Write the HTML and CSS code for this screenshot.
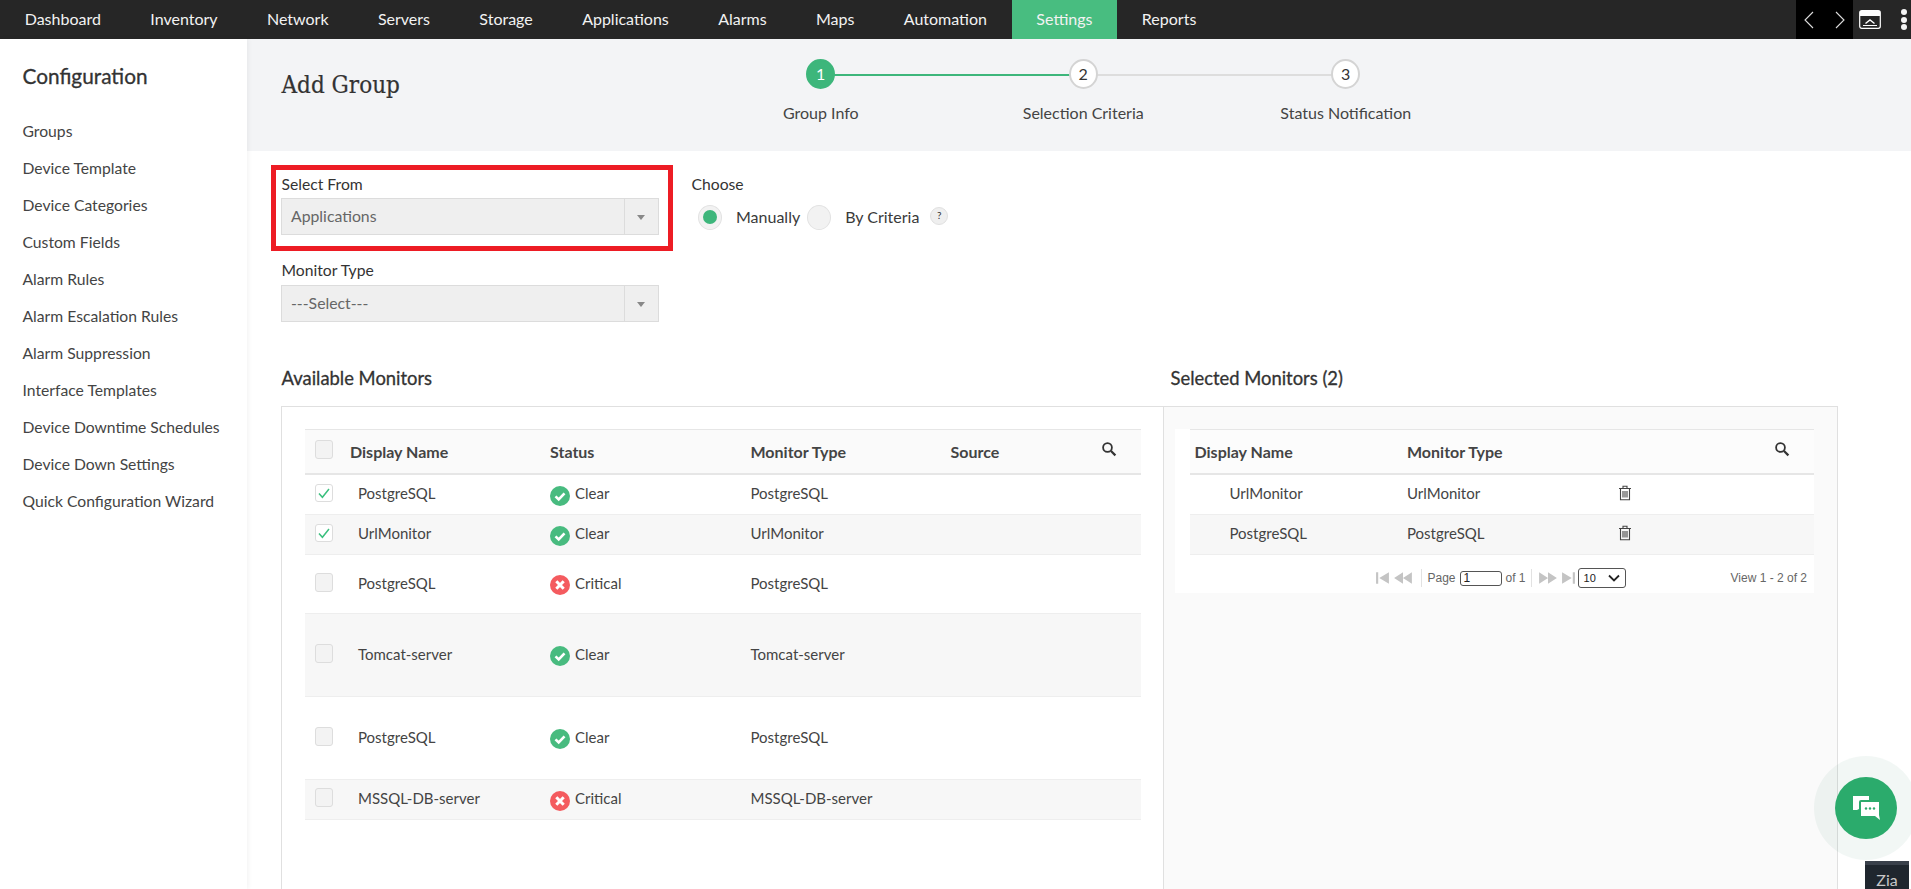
FILE: index.html
```html
<!DOCTYPE html>
<html lang="en">
<head>
<meta charset="utf-8">
<title>Add Group</title>
<link rel="stylesheet" href="styles.css">
</head>
<body>
<svg class="defs" width="0" height="0" aria-hidden="true">
  <symbol id="ok" viewBox="0 0 20 20"><circle cx="10" cy="10" r="10" fill="#48bb7f"/><path d="M5.500 10.300l3.200 3.200 5.800-6.200" fill="none" stroke="#fff" stroke-width="2.600"/></symbol>
  <symbol id="bad" viewBox="0 0 20 20"><circle cx="10" cy="10" r="10" fill="#f45b5f"/><path d="M6.300 6.300l7.400 7.400M13.700 6.300l-7.400 7.400" fill="none" stroke="#fff" stroke-width="3"/></symbol>
  <symbol id="tick" viewBox="0 0 18 18"><path d="M4 9.500l3.400 3.800L14 5" fill="none" stroke="#3cc07f" stroke-width="1.500"/></symbol>
  <symbol id="search" viewBox="0 0 16 16"><circle cx="6.500" cy="6.500" r="4.400" fill="none" stroke="#333" stroke-width="1.800"/><path d="M10 10l4.400 4.400" stroke="#333" stroke-width="2.200"/></symbol>
  <symbol id="trash" viewBox="0 0 14 16"><path d="M1 3.500h12M5 3.300V1.200h4v2.100M2.500 3.500v11.300h9V3.500M5 6v6.500M7 6v6.500M9 6v6.500" fill="none" stroke="#444" stroke-width="1.100"/></symbol>
</svg>

<nav class="topbar">
  <a class="tab">Dashboard</a><a class="tab">Inventory</a><a class="tab">Network</a><a class="tab">Servers</a><a class="tab">Storage</a><a class="tab">Applications</a><a class="tab">Alarms</a><a class="tab">Maps</a><a class="tab">Automation</a><a class="tab tab-active">Settings</a><a class="tab">Reports</a>
  <div class="top-tools">
    <div class="arrows">
      <svg width="10" height="18" viewBox="0 0 10 18"><path d="M9 1L1 9l8 8" fill="none" stroke="#ddd" stroke-width="1.100"/></svg>
      <svg width="10" height="18" viewBox="0 0 10 18"><path d="M1 1l8 8-8 8" fill="none" stroke="#ddd" stroke-width="1.100"/></svg>
    </div>
    <svg class="win" width="22" height="19" viewBox="0 0 22 19"><rect x="0.700" y="0.700" width="20.600" height="17.600" rx="2" fill="#262626" stroke="#fff" stroke-width="1.200"/><rect x="1" y="1" width="20" height="5" fill="#fff"/><path d="M6.500 13.500l4.500-3.500 4.500 3.500" fill="none" stroke="#fff" stroke-width="1.400"/><path d="M4 15.500h14" stroke="#fff" stroke-width="1"/></svg>
    <div class="dots"><i></i><i></i><i></i></div>
  </div>
</nav>

<div class="layout">
  <aside class="sidebar">
    <h2 class="side-title">Configuration</h2>
    <ul class="side-list">
      <li>Groups</li><li>Device Template</li><li>Device Categories</li><li>Custom Fields</li><li>Alarm Rules</li><li>Alarm Escalation Rules</li><li>Alarm Suppression</li><li>Interface Templates</li><li>Device Downtime Schedules</li><li>Device Down Settings</li><li>Quick Configuration Wizard</li>
    </ul>
  </aside>

  <main class="content">
    <header class="page-head">
      <h1 class="page-title">Add Group</h1>
      <ol class="stepper">
        <li class="step step-done"><span class="bubble">1</span><span class="step-label">Group Info</span></li>
        <li class="step"><span class="bubble">2</span><span class="step-label">Selection Criteria</span></li>
        <li class="step step-last"><span class="bubble">3</span><span class="step-label">Status Notification</span></li>
      </ol>
    </header>

    <section class="form">
      <div class="form-top">
        <div class="highlight">
          <label class="field-label">Select From</label>
          <div class="select"><span>Applications</span><b class="caret"></b></div>
        </div>
        <div class="choose">
          <label class="field-label">Choose</label>
          <div class="radios">
            <span class="radio radio-on"></span><span class="radio-text">Manually</span>
            <span class="radio"></span><span class="radio-text">By Criteria</span>
            <span class="help">?</span>
          </div>
        </div>
      </div>
      <div class="monitor-type">
        <label class="field-label">Monitor Type</label>
        <div class="select"><span>---Select---</span><b class="caret"></b></div>
      </div>

      <div class="titles">
        <h3 class="pane-title pane-title-left">Available Monitors</h3>
        <h3 class="pane-title">Selected Monitors (2)</h3>
      </div>

      <div class="panes">
        <div class="pane-left">
          <div class="grid-row grid-head">
            <span class="cb"></span><span>Display Name</span><span>Status</span><span>Monitor Type</span><span>Source</span>
            <svg class="search-icon"><use href="#search"/></svg>
          </div>
          <div class="grid-row h40">
            <span class="cb cb-on"><svg width="18" height="18"><use href="#tick"/></svg></span><span class="name">PostgreSQL</span><span class="status"><svg class="st"><use href="#ok"/></svg>Clear</span><span>PostgreSQL</span><span></span>
          </div>
          <div class="grid-row h40 alt">
            <span class="cb cb-on"><svg width="18" height="18"><use href="#tick"/></svg></span><span class="name">UrlMonitor</span><span class="status"><svg class="st"><use href="#ok"/></svg>Clear</span><span>UrlMonitor</span><span></span>
          </div>
          <div class="grid-row h60">
            <span class="cb"></span><span class="name">PostgreSQL</span><span class="status"><svg class="st"><use href="#bad"/></svg>Critical</span><span>PostgreSQL</span><span></span>
          </div>
          <div class="grid-row h83 alt">
            <span class="cb"></span><span class="name">Tomcat-server</span><span class="status"><svg class="st"><use href="#ok"/></svg>Clear</span><span>Tomcat-server</span><span></span>
          </div>
          <div class="grid-row h83">
            <span class="cb"></span><span class="name">PostgreSQL</span><span class="status"><svg class="st"><use href="#ok"/></svg>Clear</span><span>PostgreSQL</span><span></span>
          </div>
          <div class="grid-row h40 alt">
            <span class="cb"></span><span class="name">MSSQL-DB-server</span><span class="status"><svg class="st"><use href="#bad"/></svg>Critical</span><span>MSSQL-DB-server</span><span></span>
          </div>
        </div>

        <div class="pane-right">
          <div class="sel-box">
            <div class="sel-row sel-head">
              <span>Display Name</span><span>Monitor Type</span>
              <svg class="search-icon"><use href="#search"/></svg>
            </div>
            <div class="sel-row h40">
              <span class="sel-name">UrlMonitor</span><span>UrlMonitor</span><svg class="trash"><use href="#trash"/></svg>
            </div>
            <div class="sel-row h40 alt">
              <span class="sel-name">PostgreSQL</span><span>PostgreSQL</span><svg class="trash"><use href="#trash"/></svg>
            </div>
            <div class="pager">
              <svg class="pg" width="15" height="14" viewBox="0 0 14 12" preserveAspectRatio="none"><path d="M1 1h2v10H1zM13 1v10L4 6z" fill="#c4c4c4"/></svg>
              <svg class="pg" width="20" height="14" viewBox="0 0 18 12" preserveAspectRatio="none"><path d="M9 1v10L1 6zM17 1v10L9 6z" fill="#c4c4c4"/></svg>
              <span class="pg-sep"></span>
              <span>Page</span><span class="pg-input">1</span><span>of 1</span>
              <span class="pg-sep"></span>
              <svg class="pg" width="20" height="14" viewBox="0 0 18 12" preserveAspectRatio="none"><path d="M1 1v10l8-5zM9 1v10l8-5z" fill="#c4c4c4"/></svg>
              <svg class="pg" width="15" height="14" viewBox="0 0 14 12" preserveAspectRatio="none"><path d="M1 1v10l9-5zM11 1h2v10h-2z" fill="#c4c4c4"/></svg>
              <span class="pg-select">10<svg width="12" height="8" viewBox="0 0 12 8"><path d="M1 1.500l5 5 5-5" fill="none" stroke="#222" stroke-width="1.800"/></svg></span>
              <span class="pg-view">View 1 - 2 of 2</span>
            </div>
          </div>
        </div>
      </div>
    </section>
  </main>
</div>

<div class="chat">
  <div class="chat-btn">
    <svg width="28" height="26" viewBox="0 0 28 26"><path d="M1 1h16v4H9a2 2 0 0 0-2 2v7l-2 1H1z" fill="#fff"/><path d="M9 7h18v13l1 5-5-4H9z" fill="#fff"/><circle cx="14" cy="13.500" r="1.200" fill="#2bab6c"/><circle cx="18" cy="13.500" r="1.200" fill="#2bab6c"/><circle cx="22" cy="13.500" r="1.200" fill="#2bab6c"/></svg>
  </div>
</div>
<div class="zia">Zia</div>
</body>
</html>
```

FILE: styles.css
```css
* { box-sizing: border-box; }
html, body { margin: 0; height: 889px; overflow: hidden; }
body {
  font-family: Lato, "Open Sans", sans-serif;
  font-size: 15px;
  color: #3a3a3a;
  background: #fff;
  display: flex;
  flex-direction: column;
  position: relative;
}
.defs { position: absolute; }
ul, ol { list-style: none; margin: 0; padding: 0; }
h1, h2, h3 { margin: 0; font-weight: 400; }

/* top bar */
.topbar { height: 39px; flex: none; background: #262626; display: flex; align-items: stretch; }
.tab { padding: 0 24.700px; line-height: 38px; color: #f2f2f2; font-size: 16px; white-space: nowrap; }
.tab-active { background: #48bd80; }
.top-tools { margin-left: auto; display: flex; align-items: center; }
.arrows { width: 57px; height: 39px; background: #000; display: flex; align-items: center; justify-content: space-between; padding: 0 8px; }
.win { margin-left: 6px; }
.dots { margin: 0 4px 0 20px; display: flex; flex-direction: column; gap: 1.500px; }
.dots i { display: block; width: 6px; height: 6px; border-radius: 50%; background: #f4f4f4; }

/* layout */
.layout { flex: 1; display: flex; min-height: 0; }
.sidebar { width: 247px; flex: none; padding: 23.500px 0 0 22.500px; box-shadow: 1px 0 5px rgba(0,0,0,.06); position: relative; }
.side-title { font-size: 20.800px; line-height: 26px; color: #333; -webkit-text-stroke: 0.3px #333; }
.side-list { margin-top: 24.500px; }
.side-list li { height: 37px; line-height: 37px; font-size: 15.700px; color: #444; white-space: nowrap; }
.content { flex: 1; min-width: 0; }

/* header */
.page-head { height: 112px; background: #f3f4f6; display: flex; padding-left: 34.500px; }
.page-title { width: 408px; flex: none; font-family: "DejaVu Serif Condensed", "DejaVu Serif", serif; font-size: 24px; line-height: 28px; margin-top: 32px; color: #333; -webkit-text-stroke: 0.2px #333; }
.stepper { display: flex; padding-top: 20px; }
.step { width: 262.500px; display: flex; flex-direction: column; align-items: center; position: relative; }
.step::after { content: ""; position: absolute; left: 50%; width: 100%; top: 15px; height: 2px; background: #ddd; }
.step-done::after { background: #3db67b; }
.step-last::after { display: none; }
.bubble { width: 29px; height: 30px; border-radius: 50%; background: #fff; border: 2px solid #d4d4d4; text-align: center; line-height: 26px; font-size: 16px; color: #333; position: relative; z-index: 1; }
.step-done .bubble { background: #3db67b; border-color: #3db67b; color: #fff; }
.step-label { margin-top: 14px; line-height: 20px; font-size: 16px; color: #444; white-space: nowrap; }

/* form */
.form { padding: 14px 0 0 24px; }
.form-top { display: flex; }
.highlight { width: 402px; height: 86px; border: 5px solid #ed1c24; padding: 4px 0 0 5px; }
.field-label { display: block; line-height: 20px; font-size: 15.700px; color: #333; padding-left: 0.500px; }
.select { width: 378px; height: 37px; margin-top: 4px; background: #efefef; border: 1px solid #dcdcdc; display: flex; align-items: center; padding: 0 0 3px 9px; color: #666; font-size: 15.800px; position: relative; }
.caret { position: absolute; right: 0; top: 0; bottom: 0; width: 34px; border-left: 1px solid #dcdcdc; }
.caret::after { content: ""; position: absolute; left: 12px; top: 16px; border: 4px solid transparent; border-top: 5px solid #888; border-bottom: 0; }
.choose { margin-left: 18px; padding-top: 9px; }
.radios { display: flex; align-items: center; margin-top: 10px; padding-left: 7px; height: 26px; }
.radio { width: 24px; height: 25px; border-radius: 50%; background: #f2f2f2; border: 1px solid #e2e2e2; display: flex; align-items: center; justify-content: center; flex: none; }
.radio-on::after { content: ""; width: 14px; height: 14px; border-radius: 50%; background: #3db67b; }
.radio-text { margin: -1px 7px 0 14px; font-size: 16px; color: #3a3a3a; white-space: nowrap; }
.help { width: 18px; height: 18px; border-radius: 50%; background: #efefef; border: 1px solid #e0e0e0; font-size: 10px; line-height: 15px; text-align: center; margin: -3px 0 0 4px; color: #333; }
.monitor-type { margin: 9px 0 0 10px; }
.monitor-type .select { margin-top: 5px; }

.titles { display: flex; margin: 44px 0 0 10.500px; }
.pane-title { font-size: 18.400px; line-height: 24px; color: #333; -webkit-text-stroke: 0.3px #333; }
.pane-title-left { width: 889px; flex: none; }

.panes { display: flex; margin: 16px 0 0 10px; width: 1557px; height: 500px; border-top: 1px solid #e0e0e0; border-left: 1px solid #e0e0e0; border-right: 1px solid #e0e0e0; }
.pane-left { width: 881px; flex: none; padding: 22px 22px 0 23px; }
.pane-right { flex: 1; background: #fafafa; border-left: 1px solid #e0e0e0; padding: 22px 23px 0 11px; }

/* left table */
.grid-row { display: grid; grid-template-columns: 45px 200px 200.500px 200px 1fr; align-items: center; padding-bottom: 3px; border-bottom: 1px solid #eee; font-size: 15px; color: #444; position: relative; }
.grid-head { height: 46px; padding-bottom: 0; background: #fafafa; border-top: 1px solid #e6e6e6; border-bottom: 2px solid #e6e6e6; font-weight: 700; font-size: 16px; color: #444; }
.h40 { height: 40px; }
.h60 { height: 59px; }
.h83 { height: 83px; }
.alt { background: #f7f7f7; }
.cb { width: 18px; height: 19px; margin: 0 0 1px 10px; border: 1px solid #ddd; border-radius: 3px; background: #f3f3f3; display: block; }
.grid-head .cb { margin-bottom: 4px; }
.cb-on { background: #fff; height: 18px; overflow: hidden; }
.cb-on svg { display: block; margin: -1px 0 0 -1px; }
.name { padding-left: 8px; }
.status { display: flex; align-items: center; }
.st { width: 20px; height: 20px; margin-right: 5px; flex: none; position: relative; top: 2.500px; }
.search-icon { width: 16px; height: 16px; position: absolute; right: 24px; top: 11px; }

/* right table */
.sel-box { background: #fff; padding-left: 14.500px; height: 164px; width: 639px; }
.sel-row { display: grid; grid-template-columns: 212.500px 211px 1fr; align-items: center; padding: 0 0 3px 5px; border-bottom: 1px solid #eee; font-size: 15px; color: #444; position: relative; }
.sel-head { height: 46px; padding-bottom: 0; background: #fcfcfc; border-top: 1px solid #e6e6e6; border-bottom: 2px solid #e6e6e6; font-weight: 700; font-size: 16px; }
.sel-name { padding-left: 35px; }
.trash { width: 14px; height: 16px; }
.pager { display: flex; align-items: center; height: 38px; padding: 8px 0 0 185px; font-family: "Liberation Sans", Arial, sans-serif; font-size: 12px; color: #666; }
.pg { flex: none; margin-right: 3px; }
.pg-sep { width: 1px; height: 18px; background: #e2e2e2; margin: 0 6px 0 5px; }
.pg-input { width: 42px; height: 15px; border: 1px solid #555; border-radius: 3px; margin: 0 4px; padding-left: 3px; line-height: 13px; color: #222; }
.pg-select { width: 48px; height: 20px; border: 1px solid #555; border-radius: 3px; margin-left: -1px; display: flex; align-items: center; justify-content: space-between; padding: 0 5px; font-size: 11px; color: #222; }
.pg-view { margin-left: auto; margin-right: 7px; }

/* overlays */
.chat { position: absolute; left: 1814px; top: 756px; width: 104px; height: 104px; border-radius: 50%; background: rgba(30,120,90,.06); display: flex; align-items: center; justify-content: center; }
.chat-btn { width: 62px; height: 62px; border-radius: 50%; background: #2bab6c; display: flex; align-items: center; justify-content: center; }
.zia { position: absolute; left: 1865px; top: 861px; width: 44px; height: 28px; background: #1f262e; border-top: 4px solid #39404a; color: #c8c8c8; font-size: 16px; text-align: center; line-height: 30px; }
```
